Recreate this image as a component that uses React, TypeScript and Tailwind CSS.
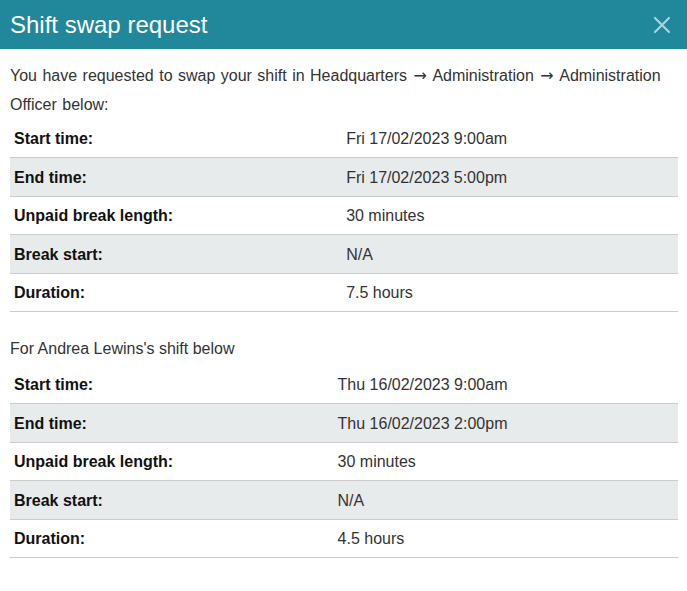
import React from "react";

type Row = [string, string];

const first: Row[] = [
  ["Start time:", "Fri 17/02/2023 9:00am"],
  ["End time:", "Fri 17/02/2023 5:00pm"],
  ["Unpaid break length:", "30 minutes"],
  ["Break start:", "N/A"],
  ["Duration:", "7.5 hours"],
];

const second: Row[] = [
  ["Start time:", "Thu 16/02/2023 9:00am"],
  ["End time:", "Thu 16/02/2023 2:00pm"],
  ["Unpaid break length:", "30 minutes"],
  ["Break start:", "N/A"],
  ["Duration:", "4.5 hours"],
];

function Table({ rows }: { rows: Row[] }) {
  return (
    <table className="w-[668px] border-collapse">
      <tbody>
        {rows.map(([k, v], i) => (
          <tr key={k} className={`border-b border-[#cccccc] ${i % 2 === 1 ? "bg-[#e8ebeb]" : ""}`}>
            <th className="h-[38.5px] px-[4px] pt-[2px] pb-0 text-left font-bold text-[#111]">{k}</th>
            <td className="h-[38.5px] px-[4px] pt-[2px] pb-0 text-[#333]">{v}</td>
          </tr>
        ))}
      </tbody>
    </table>
  );
}

const Arrow = () => <span className="font-['DejaVu_Sans'] mx-[1px]">→</span>;

export default function App() {
  return (
    <div className="w-[687px] h-[591px] bg-white text-[16px] text-[#333]" style={{ fontFamily: '"Liberation Sans", Arial, sans-serif' }}>
      <div className="h-[49px] bg-[#21879b] flex items-center justify-between pl-[10px] pr-[16px]">
        <h1 className="text-white text-[24px] leading-none mt-[1px]">Shift swap request</h1>
        <svg width="18" height="18" viewBox="0 0 18 18" className="mt-[1px]">
          <path d="M2 2 L16 16 M16 2 L2 16" stroke="#a6d5dd" strokeWidth="2.2" strokeLinecap="round" />
        </svg>
      </div>
      <div className="px-[10px] pt-[12px]">
        <p className="leading-[29px] m-0 [word-spacing:1px]">
          You have requested to swap your shift in Headquarters <Arrow /> Administration <Arrow /> Administration Officer below:
        </p>
        <Table rows={first} />
        <p className="leading-[29px] mt-[22px] mb-[2px]">For Andrea Lewins's shift below</p>
        <Table rows={second} />
      </div>
    </div>
  );
}
